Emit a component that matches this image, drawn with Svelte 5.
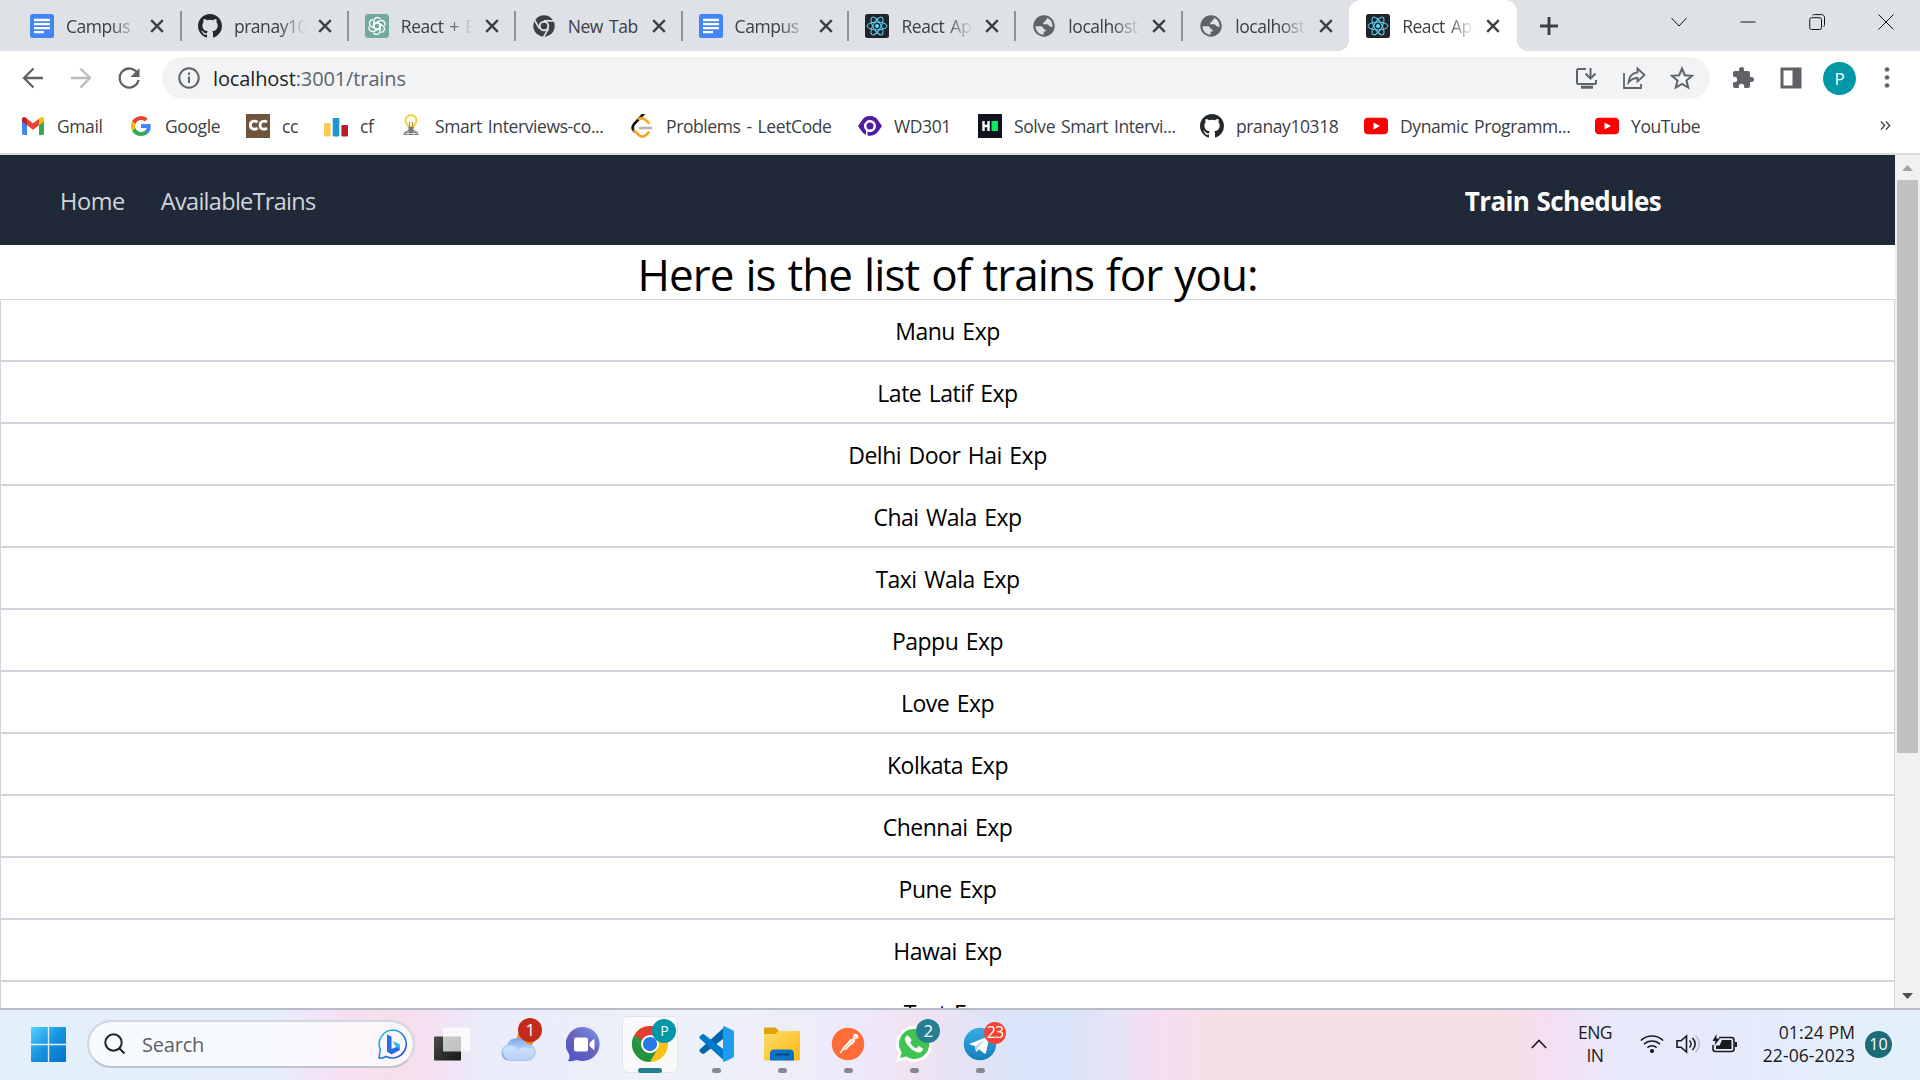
<script>
  const tabs = [
    { icon: 'doc', label: 'Campus Placement' },
    { icon: 'github', label: 'pranay10318' },
    { icon: 'gpt', label: 'React + Express' },
    { icon: 'chrome', label: 'New Tab' },
    { icon: 'doc', label: 'Campus Placement' },
    { icon: 'react', label: 'React App' },
    { icon: 'globe', label: 'localhost:3001' },
    { icon: 'globe', label: 'localhost:3001' },
    { icon: 'react', label: 'React App', active: true }
  ];
  const bookmarks = [
    { icon: 'gmail', label: 'Gmail', width: 108 },
    { icon: 'google', label: 'Google', width: 117 },
    { icon: 'cc', label: 'cc', width: 78 },
    { icon: 'cf', label: 'cf', width: 75 },
    { icon: 'bulb', label: 'Smart Interviews-co...', width: 231 },
    { icon: 'leet', label: 'Problems - LeetCode', width: 228 },
    { icon: 'wd', label: 'WD301', width: 120 },
    { icon: 'hacker', label: 'Solve Smart Intervi...', width: 222 },
    { icon: 'github', label: 'pranay10318', width: 164 },
    { icon: 'youtube', label: 'Dynamic Programm...', width: 231 },
    { icon: 'youtube', label: 'YouTube', width: 130 }
  ];
  const trains = ['Manu Exp', 'Late Latif Exp', 'Delhi Door Hai Exp', 'Chai Wala Exp', 'Taxi Wala Exp', 'Pappu Exp', 'Love Exp', 'Kolkata Exp', 'Chennai Exp', 'Pune Exp', 'Hawai Exp', 'Test Exp'];
  const apps = [
    { icon: 'desktop' },
    { icon: 'weather', badge: '1', tone: 'red' },
    { icon: 'chat' },
    { icon: 'chromeColor', badge: 'P', tone: 'teal', active: true },
    { icon: 'vscode', running: true },
    { icon: 'folder', running: true },
    { icon: 'postman', running: true },
    { icon: 'whatsapp', badge: '2', tone: 'blue', running: true },
    { icon: 'telegram', badge: '23', tone: 'coral', running: true }
  ];
</script>

{#snippet glyph(name)}
  {#if name === 'doc'}
    <svg viewBox="0 0 24 24"><rect width="24" height="24" rx="2.5" fill="#4285f4" /><path d="M4 6h16M4 10.2h16M4 14.2h16M4 18.2h10" stroke="#fff" stroke-width="2.3" /></svg>
  {:else if name === 'github'}
    <svg viewBox="0 0 16 16"><path fill="#24292f" d="M8 0C3.58 0 0 3.58 0 8c0 3.54 2.29 6.53 5.47 7.59.4.07.55-.17.55-.38 0-.19-.01-.82-.01-1.49-2.01.37-2.53-.49-2.69-.94-.09-.23-.48-.94-.82-1.13-.28-.15-.68-.52-.01-.53.63-.01 1.08.58 1.23.82.72 1.21 1.87.87 2.33.66.07-.52.28-.87.51-1.07-1.78-.2-3.64-.89-3.64-3.95 0-.87.31-1.59.82-2.15-.08-.2-.36-1.02.08-2.12 0 0 .67-.21 2.2.82a7.4 7.4 0 0 1 4 0c1.53-1.04 2.2-.82 2.2-.82.44 1.1.16 1.92.08 2.12.51.56.82 1.27.82 2.15 0 3.07-1.87 3.75-3.65 3.95.29.25.54.73.54 1.48 0 1.07-.01 1.93-.01 2.2 0 .21.15.46.55.38A8.01 8.01 0 0 0 16 8c0-4.42-3.58-8-8-8z" /></svg>
  {:else if name === 'gpt'}
    <svg viewBox="0 0 24 24"><rect width="24" height="24" rx="3" fill="#74aa9c" /><g fill="none" stroke="#fff" stroke-width="1.3" stroke-linejoin="round">{#each [0, 60, 120, 180, 240, 300] as turn}<path transform="rotate({turn} 12 12)" d="M8.9 13.8V7.2a3.6 3.6 0 0 1 6.6-2M8.9 10.2l3.1-1.8 5 2.9" />{/each}</g></svg>
  {:else if name === 'chrome'}
    <svg viewBox="0 0 24 24"><circle cx="12" cy="12" r="10.7" fill="#3c4043" /><path d="M12 6.8h10M7.5 14.6 2.6 6.2M16.5 14.6l-5 8.5" stroke="#dee1e6" stroke-width="1.7" /><circle cx="12" cy="12" r="4.3" fill="#3c4043" stroke="#dee1e6" stroke-width="1.9" /></svg>
  {:else if name === 'react'}
    <svg viewBox="0 0 24 24"><rect width="24" height="24" rx="2.5" fill="#20232a" /><g fill="none" stroke="#61dafb" stroke-width="1"><ellipse cx="12" cy="12" rx="10" ry="3.9" /><ellipse cx="12" cy="12" rx="10" ry="3.9" transform="rotate(60 12 12)" /><ellipse cx="12" cy="12" rx="10" ry="3.9" transform="rotate(120 12 12)" /></g><circle cx="12" cy="12" r="2" fill="#61dafb" /></svg>
  {:else if name === 'globe'}
    <svg viewBox="0 0 24 24"><circle cx="12" cy="12" r="10.700" fill="#5f6368" /><path d="M14 3.500c4 1 6.500 4.400 6.500 8.500l-.3 1.500c-.8-.9-1.700-1.300-3-1.200-.2-1.300-.9-2-2.400-2h-3.600l-.2-1.700c1.500-.2 2.100-.8 2.200-2.200 1.300-.2 1.800-.9 1.800-2.100zM3.500 12.200h5c1.900 0 2.800.9 2.900 2.600 1.700.3 2.300 1.100 2.200 2.600h-1.900v3.200c-4.500 0-8-3.500-8.200-8.400z" fill="#dee1e6" /></svg>
  {:else if name === 'gmail'}
    <svg viewBox="0 0 24 24"><path d="M1 5v14.500c0 .9.600 1.500 1.500 1.500H6V10z" fill="#4285f4" /><path d="M23 5v14.500c0 .9-.6 1.500-1.500 1.500H18V10z" fill="#34a853" /><path d="M18 4.700v6.500l5-3.700V5.300c0-2-2.200-2.900-3.600-1.700z" fill="#fbbc04" /><path d="M6 4.700v6.500L1 7.500V5.300c0-2 2.200-2.900 3.600-1.700z" fill="#c5221f" /><path d="m6 4.700 6 4.500 6-4.500v6.500l-6 4.500-6-4.500z" fill="#ea4335" /></svg>
  {:else if name === 'google'}
    <svg viewBox="0 0 48 48"><path fill="#ea4335" d="M24 12c3 0 5.600 1 7.600 3l5.700-5.700A20 20 0 0 0 6.100 15.100l6.600 5.100C14.300 15.500 18.700 12 24 12z" /><path fill="#4285f4" d="M43.600 24.500c0-1.500-.1-2.900-.4-4.300H24v8h11c-.5 2.600-1.900 4.800-4 6.300l6.500 5c3.900-3.600 6.100-8.900 6.100-15z" /><path fill="#fbbc05" d="M12.700 28.200a12 12 0 0 1 0-8l-6.600-5.100a20 20 0 0 0 0 18z" /><path fill="#34a853" d="M24 44c5.400 0 10-1.800 13.500-4.800l-6.500-5a12.200 12.200 0 0 1-18.300-6l-6.600 5.100A20 20 0 0 0 24 44z" /></svg>
  {:else if name === 'cc'}
    <svg viewBox="0 0 24 24"><rect width="24" height="24" fill="#70543e" /><path d="M11.600 8.200c-2.800-2-7.300-1-7.300 3s4.500 5 7.300 3M21 8.200c-2.800-2-7-1-7 3s4.200 5 7 3" fill="none" stroke="#fff" stroke-width="2.800" /></svg>
  {:else if name === 'cf'}
    <svg viewBox="0 0 24 24"><rect y="9" width="6.600" height="13.500" rx="1.200" fill="#f9cb55" /><rect x="8.700" y="4" width="6.600" height="18.500" rx="1.200" fill="#2196d3" /><rect x="17.400" y="11" width="6.600" height="11.500" rx="1.200" fill="#b91d2b" /></svg>
  {:else if name === 'bulb'}
    <svg viewBox="0 0 24 24"><path d="M9.500 13c-.4-2-3-3.500-3-6.500a5.500 5.500 0 0 1 11 0c0 3-2.600 4.500-3 6.500z" fill="#fffbe6" stroke="#edd044" stroke-width="1.800" /><path d="M10.500 8v6M13.500 8v6" stroke="#a48b39" /><path d="M9.500 13h5v3l4 2 1 3H4.500l1-3 4-2z" fill="#77787e" /><path d="M6 19.500h12M9 17v4M15 17v4" stroke="#d5d5d8" /></svg>
  {:else if name === 'leet'}
    <svg viewBox="0 0 24 24"><path d="M13.500 0 4.500 9.700c-2.500 2.700-2.500 5.300-.1 7.700" fill="none" stroke="#111" stroke-width="2.700" stroke-linecap="round" /><path d="m18.500 18.500-2.300 2.400c-2.300 2.300-5.300 2.400-7.600 0l-4.200-4.200M9 4.900c2.500-1.300 5-.8 7.100 1.400l2.500 2.500" fill="none" stroke="#ffa116" stroke-width="2.600" stroke-linecap="round" /><path d="M10 14h11" stroke="#b3b3b3" stroke-width="2.600" stroke-linecap="round" /></svg>
  {:else if name === 'wd'}
    <svg viewBox="0 0 24 24"><path fill="#4f1fa0" fill-rule="evenodd" d="M0 12 3.500 7a9.800 9.800 0 0 1 17 0L24 12l-3.500 5a9.800 9.800 0 0 1-11 4.500v-4A6 6 0 1 0 6 12c0 2 .7 3.200 2 4.500v4.400A9.800 9.800 0 0 1 3.500 17z" /><circle cx="12" cy="12" r="3.500" fill="#4f1fa0" /></svg>
  {:else if name === 'hacker'}
    <svg viewBox="0 0 24 24"><rect width="24" height="24" fill="#0e141e" /><path d="M5.500 7v10M10.500 7v10M5 12h6" stroke="#fff" stroke-width="2.400" /><rect x="13.500" y="7" width="6.500" height="10" fill="#00ea64" /></svg>
  {:else if name === 'youtube'}
    <svg viewBox="0 0 24 24"><rect y="3.700" width="24" height="16.600" rx="4" fill="#f00" /><path d="m9.500 8.500 6.500 3.500-6.500 3.500z" fill="#fff" /></svg>
  {:else if name === 'desktop'}
    <svg viewBox="0 0 36 36"><defs><linearGradient id="dk" x2="1" y2="1"><stop stop-color="#4a4a46" /><stop offset="1" stop-color="#181816" /></linearGradient></defs><rect x="0" y="10.500" width="27" height="24" rx="1" fill="url(#dk)" /><rect x="9" y="1.500" width="27" height="24" rx="1" fill="#fff" opacity=".72" /></svg>
  {:else if name === 'weather'}
    <svg viewBox="0 0 36 36"><defs><linearGradient id="wc" x2="0" y2="1"><stop stop-color="#7da7ea" /><stop offset=".5" stop-color="#b8d3f8" /><stop offset="1" stop-color="#7099de" /></linearGradient></defs><circle cx="26" cy="12" r="9" fill="#f18918" /><path d="M8 34.500a8 8 0 0 1-1-15.500 11 11 0 0 1 20-1 8 8 0 0 1 1 16.500z" fill="url(#wc)" /><path d="M8 34a8 8 0 0 1-1-14c5-2 9 0 11 4 4-4 13-3 16 0 2 4 0 10-6 10z" fill="#cfe1fb" opacity=".75" /></svg>
  {:else if name === 'chat'}
    <svg viewBox="0 0 36 36"><defs><linearGradient id="ch" x1="1" x2=".3" y2="1"><stop stop-color="#789cf0" /><stop offset=".5" stop-color="#6a64bd" /><stop offset="1" stop-color="#5455c6" /></linearGradient></defs><path d="M18 1A17 17 0 1 1 11 34c-3 1-6 1.500-9 .9 1.600-2 2-4 1-7A17 17 0 0 1 18 1z" fill="url(#ch)" /><rect x="8" y="11.500" width="14" height="14" rx="2" fill="#fff" /><path d="m24 17 4-3.500v10L24 20z" fill="#fff" stroke="#fff" stroke-linejoin="round" /></svg>
  {:else if name === 'chromeColor'}
    <svg viewBox="0 0 48 48"><circle cx="24" cy="24" r="24" fill="#fbc116" /><path d="M3.200 12A24 24 0 0 1 44.800 12H24a12 12 0 0 0-10.400 6z" fill="#e33b2e" /><path d="M3.200 12 13.600 30A12 12 0 0 0 34.400 30L24 48A24 24 0 0 1 3.200 12z" fill="#229342" /><path d="M3.200 12h20.800v4l-12 8z" fill="#e33b2e" /><path d="M3.200 12 13.600 30l4-8z" fill="#229342" /><circle cx="24" cy="24" r="12" fill="#fff" /><circle cx="24" cy="24" r="9.500" fill="#2878e8" /></svg>
  {:else if name === 'vscode'}
    <svg viewBox="0 0 36 36"><path d="M27 .5 2 23.300c-.8.700-.8 1.900 0 2.600l2 1.700c.6.500 1.400.5 2 .1L27 11.500z" fill="#0065a9" /><path d="M27 35.500 2 12.700c-.8-.7-.8-1.900 0-2.600l2-1.700c.6-.5 1.400-.5 2-.1L27 24.500z" fill="#007acc" /><path d="m26.500.2 8.200 4c.8.400 1.300 1.100 1.300 2v23.600c0 .9-.5 1.600-1.300 2l-8.200 4C25.200 36 24.700 35 25 34V2c-.2-1 .2-1.900 1.500-1.800z" fill="#1f9cf0" /></svg>
  {:else if name === 'folder'}
    <svg viewBox="0 0 36 36"><defs><linearGradient id="fo" x2="1" y2="1"><stop stop-color="#ffdc6c" /><stop offset="1" stop-color="#fdb90e" /></linearGradient></defs><path d="M0 3c0-1 .6-1.500 1.500-1.500h10L15 5h19.500c1 0 1.500.5 1.500 1.500V12H0z" fill="#e2a305" /><path d="M0 8h11l4-3h20l1 1v27c0 1-.5 1.500-1.500 1.500h-33C.5 34.500 0 34 0 33z" fill="url(#fo)" /><path d="M6 34.500v-7c0-2.200 1.500-4 4-4h16c2.500 0 4 1.800 4 4v7z" fill="#0873cb" /><path d="M11 28.500h14" stroke="#084a86" stroke-width="1.800" stroke-linecap="round" /></svg>
  {:else if name === 'postman'}
    <svg viewBox="0 0 36 36"><circle cx="18" cy="18" r="16.200" fill="#ff6c37" /><circle cx="25.500" cy="10.500" r="2.800" fill="#fff" /><path d="m9.500 27 3.500-5.500 7.500-8.500 3.500 2.500-7.500 8-3 .5-2.500 3z" fill="#fff" /><path d="m21 13 3.500-.5.500 3-3 3.500-3-2z" fill="#fff" /><path d="m14 23 9-8.500M23 9.500l4 3" stroke="#ff8b5e" stroke-width=".8" /></svg>
  {:else if name === 'whatsapp'}
    <svg viewBox="0 0 36 36"><path d="M18 0a18 18 0 1 1-8.500 33.800L0 36.300l2.500-9A18 18 0 0 1 18 0z" fill="#fff" /><path d="M18 3A15 15 0 1 1 10 30.500L4 32l1.700-5.500A15 15 0 0 1 18 3z" fill="#40c351" /><path d="M12 9.500c-1-.5-3 1-3.100 3.300 0 5 8.100 13.200 13.300 13.600 3 .2 5.300-2.200 4.800-4l-4.300-2.300c-1 .8-1.500 2-2.200 2.200-2.300-.7-5.200-3.300-6.200-5.900-.1-.7 1.200-1.400 1.400-2.300z" fill="#fff" /></svg>
  {:else if name === 'telegram'}
    <svg viewBox="0 0 36 36"><defs><linearGradient id="tg" x2="0" y2="1"><stop stop-color="#38aee4" /><stop offset="1" stop-color="#157db9" /></linearGradient></defs><circle cx="18" cy="18" r="16.200" fill="url(#tg)" /><path d="m7 18 19-7.500c1-.3 1.500.2 1.300 1.200L24 26.500c-.3 1-1 1.300-2 .7l-5-4-3 3-1-6z" fill="#fff" /><path d="m13 20 10.500-6.500-7.500 8-1.800 4z" fill="#b9d9ec" /></svg>
  {/if}
{/snippet}

<div class="screen">
  <header class="tabstrip">
    <div class="tabs">
      {#each tabs as tab, i}
        <div class="tab" class:active={tab.active} class:bare={i === 7 || tab.active}>
          <span class="ico">{@render glyph(tab.icon)}</span>
          <span class="tab-label" class:full={tab.label === 'New Tab'}>{tab.label}</span>
          <svg class="close" viewBox="0 0 14 14"><path d="m1.200 1.200 11.600 11.600m0-11.600L1.200 12.800" stroke="#3c4043" stroke-width="2.400" /></svg>
        </div>
      {/each}
    </div>
    <svg class="plus" viewBox="0 0 18 18"><path d="M9 0v18M0 9h18" stroke="#3c4043" stroke-width="2.900" /></svg>
    <div class="controls">
      <svg viewBox="0 0 16 16"><path d="m.5 4 7.500 8 7.500-8" /></svg>
      <svg viewBox="0 0 16 16"><path d="M.5 8h15" /></svg>
      <svg viewBox="0 0 16 16"><rect x=".7" y="3.700" width="11.800" height="11.800" rx="2" /><path d="M3.500 1.200C4 .7 4.500.6 5.500.6h7c1.800 0 3 1.200 3 3v6.900c0 1-.3 1.700-.8 2.200" /></svg>
      <svg viewBox="0 0 16 16"><path d="m.5.500 15 15m0-15-15 15" /></svg>
    </div>
  </header>

  <div class="toolbar">
    <div class="history">
      <svg viewBox="0 0 24 24"><path d="M22 12H3m9.500-9.500L3 12l9.500 9.500" stroke="#5f6368" /></svg>
      <svg viewBox="0 0 24 24"><path d="M2 12h19m-9.500-9.500L21 12l-9.500 9.500" stroke="#b9bbbe" /></svg>
      <svg viewBox="0 0 24 24"><path d="M20.300 7A9.500 9.500 0 1 0 21.500 14" stroke="#5f6368" /><path d="M22.500 2v9h-9z" fill="#5f6368" /></svg>
    </div>
    <div class="omnibox">
      <svg class="info" viewBox="0 0 22 22"><circle cx="11" cy="11" r="9.700" /><path d="M11 9.500V16M11 5.500V8" /></svg>
      <span class="url">localhost<i>:3001/trains</i></span>
      <span class="omni-actions">
        <svg viewBox="0 0 24 24"><path d="M12 3H4.500C3.400 3 3 3.600 3 4.500v12c0 .9.500 1.500 1.500 1.500h16c.9 0 1.500-.6 1.500-1.500V14M16.500 2v10m-5-4.500 5 5 5-5" /><path d="M7 21.200h12" stroke-width="3" /></svg>
        <svg viewBox="0 0 24 24"><path d="M2 7v15h17v-4M15.500 2.500l7 6.500-7 6.500V12c-4 0-6.500 1.300-9 4.500.5-6 3.500-9.500 9-10.200z" stroke-width="1.800" /></svg>
        <svg viewBox="0 0 24 24"><path d="m12 2.500 2.800 6.700 7.200.6-5.500 4.700 1.700 7-6.200-3.700-6.200 3.700 1.700-7L2 9.800l7.200-.6z" /></svg>
      </span>
    </div>
    <div class="extensions">
      <svg viewBox="0 0 24 24"><path fill="#5f6368" d="M20.500 11H19V7a2 2 0 0 0-2-2h-4V3.500a2.500 2.500 0 0 0-5 0V5H4a2 2 0 0 0-2 2v3.800h1.500a2.700 2.700 0 0 1 0 5.400H2V20a2 2 0 0 0 2 2h3.800v-1.500a2.700 2.700 0 0 1 5.400 0V22H17a2 2 0 0 0 2-2v-4h1.500a2.500 2.500 0 0 0 0-5z" /></svg>
      <svg viewBox="0 0 24 24"><path fill="#5f6368" fill-rule="evenodd" d="M1.500 1.500h21v21h-21zM4.500 4.500v15h9v-15z" /></svg>
      <span class="avatar">P</span>
      <svg viewBox="0 0 24 24"><g fill="#5f6368"><circle cx="12" cy="3.500" r="2.300" /><circle cx="12" cy="11.500" r="2.300" /><circle cx="12" cy="19.500" r="2.300" /></g></svg>
    </div>
  </div>

  <nav class="bookmarks">
    {#each bookmarks as mark}
      <span class="bookmark" style:width="{mark.width}px"><span class="ico">{@render glyph(mark.icon)}</span><b>{mark.label}</b></span>
    {/each}
    <svg class="more" viewBox="0 0 12 12"><path d="m1 1.500 4 4.500-4 4.500M6.500 1.500l4 4.500-4 4.500" /></svg>
  </nav>

  <div class="viewport">
    <main>
      <nav class="site-nav">
        <span class="home">Home</span>
        <span class="available">AvailableTrains</span>
        <strong>Train Schedules</strong>
      </nav>
      <h1>Here is the list of trains for you:</h1>
      {#each trains as train}
        <div class="train">{train}</div>
      {/each}
    </main>
    <aside class="scrollbar">
      <svg viewBox="0 0 25 25"><path d="m12.500 10 5.500 6H7z" fill="#a3a3a3" /></svg>
      <div class="thumb"></div>
      <svg viewBox="0 0 25 25"><path d="m12.500 16 5.500-6H7z" fill="#505050" /></svg>
    </aside>
  </div>

  <footer class="taskbar">
    <svg class="windows" viewBox="0 0 35 35"><defs><linearGradient id="win" x2="1" y2="1"><stop stop-color="#54d2ff" /><stop offset=".5" stop-color="#1593df" /><stop offset="1" stop-color="#0570cb" /></linearGradient></defs><path fill="url(#win)" d="M1 0h15.800v16.800H0V1q0-1 1-1zM18.200 0H34q1 0 1 1v15.800H18.200zM0 18.200h16.800V35H1q-1 0-1-1zM18.200 18.200H35V34q0 1-1 1H18.200z" /></svg>
    <div class="search">
      <svg class="lens" viewBox="0 0 22 22"><circle cx="9.500" cy="9.500" r="8.200" /><path d="m15.500 15.500 5 5" /></svg>
      <span>Search</span>
      <svg class="bing" viewBox="0 0 30 30"><defs><linearGradient id="bi" x2="1" y2="1"><stop stop-color="#16cfee" /><stop offset=".5" stop-color="#2785f1" /><stop offset="1" stop-color="#1c4ec5" /></linearGradient></defs><path d="M15 1A14 14 0 1 1 8 27.500C6 29 3.500 29.300 1 29l1.300-8.500A14 14 0 0 1 15 1z" fill="none" stroke="url(#bi)" stroke-width="1.600" /><path d="m9 5.500 4.500 2V20L22 16.500v4.500l-8.500 4.500-4.500-3z" fill="#2969ec" /><path d="m15 12 7 3.500v5.500l-2-2.500-3-1.500z" fill="#22bfe9" /></svg>
    </div>
    <div class="apps">
      {#each apps as app}
        <div class="app" class:current={app.active}>
          <span class="app-icon">{@render glyph(app.icon)}</span>
          {#if app.badge}<span class="badge {app.tone}">{app.badge}</span>{/if}
          {#if app.running || app.active}<span class="run" class:wide={app.active}></span>{/if}
        </div>
      {/each}
    </div>
    <div class="tray">
      <svg class="caret" viewBox="0 0 16 10"><path d="m.8 9 7.200-7.500L15.200 9" /></svg>
      <span class="lang">ENG<br />IN</span>
      <svg class="wifi" viewBox="0 0 24 20"><path d="M.8 6.500a16 16 0 0 1 22.400 0M4 10.200a11.500 11.500 0 0 1 16 0M7.300 13.700a6.700 6.700 0 0 1 9.400 0" /><circle cx="12" cy="17" r="1.300" fill="#191b20" /></svg>
      <svg class="volume" viewBox="0 0 24 20"><path d="M1 6.800h4L10.500 2v16L5 13.200H1zM13.500 6.500c2 2 2 5 0 7M16.500 4c3.500 3.500 3.500 8.500 0 12" /><path d="M19.500 1.500c5 5 5 12 0 17" opacity=".22" /></svg>
      <svg class="battery" viewBox="0 0 25 20"><path d="M7 3.500h12.500A2.500 2.500 0 0 1 22 6v9a2.500 2.500 0 0 1-2.500 2.500h-16A2.500 2.500 0 0 1 1 15v-4" /><path d="M10 6h9.500v9H4v-3.500h3.500zM4.500 0 .5 7h3l-1 4.500L8 4.500H4.500zM22.500 8H25v5h-2.500z" fill="#191b20" stroke="none" /></svg>
      <span class="clock">01:24 PM<br />22-06-2023</span>
      <span class="alerts">10</span>
    </div>
  </footer>
</div>

<style>
  :global(body) { overflow: hidden; }
  * { box-sizing: border-box; }
  svg { display: block; flex: none; }
  .screen { width: 1920px; height: 1080px; display: flex; flex-direction: column; overflow: hidden; background: #fff; color: #000; font-family: "Open Sans", "Noto Sans", sans-serif; }
  .ico { width: 24px; height: 24px; flex: none; }
  .ico svg { width: 100%; height: 100%; }
  .tabstrip { height: 51px; flex: none; display: flex; align-items: center; background: #dee1e6; padding-left: 14px; }
  .tabs { display: flex; height: 51px; }
  .tab { width: 166.9px; height: 51px; flex: none; position: relative; padding: 0 17px 0 16px; display: flex; align-items: center; gap: 12px; }
  .tab:nth-child(n + 2) { padding-left: 17px; }
  .tab::after { content: ""; position: absolute; right: -1px; top: 11px; width: 2px; height: 30px; background: #8f9297; }
  .tab.bare::after { display: none; }
  .tab.active { width: 168px; background: #fff; border-radius: 12px 12px 0 0; }
  .tab.active::before { content: ""; position: absolute; inset: auto -12px 0; height: 12px; background: radial-gradient(circle at 0 0, #dee1e6 12px, #fff 12.5px) left / 12px 12px no-repeat, radial-gradient(circle at 100% 0, #dee1e6 12px, #fff 12.5px) right / 12px 12px no-repeat; }
  .tab-label { width: 72px; flex: none; overflow: hidden; white-space: nowrap; font-size: 17.5px; letter-spacing: -.45px; word-spacing: 2px; color: #3c4043; mask-image: linear-gradient(90deg, #000 62%, transparent 100%); }
  .tab-label.full { mask-image: none; }
  .close { width: 14px; height: 14px; }
  .plus { width: 18px; height: 18px; margin-left: 23px; }
  .controls { display: flex; gap: 53px; margin: -8px 26px 0 auto; }
  .controls svg { width: 16px; height: 16px; fill: none; stroke: #111; stroke-width: 1; }
  .toolbar { height: 54px; flex: none; display: flex; align-items: center; }
  .history { width: 162px; flex: none; display: flex; gap: 24px; padding-left: 21px; }
  .history svg { width: 24px; height: 24px; fill: none; stroke-width: 2.3; }
  .omnibox { width: 1548px; height: 42px; display: flex; align-items: center; border-radius: 21px; background: #f1f3f4; padding: 0 16px 0 16px; }
  .info { width: 22px; height: 22px; fill: none; stroke: #5f6368; stroke-width: 2; }
  .url { margin-left: 13px; font-size: 20px; letter-spacing: -.12px; color: #202124; }
  .url i { font-style: normal; color: #5f6368; }
  .omni-actions { margin-left: auto; display: flex; gap: 24px; }
  .omni-actions svg { width: 24px; height: 24px; fill: none; stroke: #5f6368; stroke-width: 2; }
  .extensions { display: flex; align-items: center; margin-left: 21px; }
  .extensions svg { width: 24px; height: 24px; }
  .extensions svg:nth-child(2) { margin-left: 24px; }
  .avatar { width: 33px; height: 33px; border-radius: 50%; background: #0097a7; color: #fff; display: grid; place-items: center; font-size: 17px; margin: 0 19px 0 20px; }
  .bookmarks { height: 50px; flex: none; display: flex; align-items: center; padding: 0 29px 7px 21px; border-bottom: 2px solid #dadbdc; }
  .bookmark { display: flex; align-items: center; gap: 12px; flex: none; white-space: nowrap; }
  .bookmark b { font-weight: 400; font-size: 17.5px; letter-spacing: -.4px; word-spacing: 1.8px; color: #3c4043; }
  .more { width: 11px; height: 11px; margin-left: auto; fill: none; stroke: #3c4043; stroke-width: 1.5; }
  .viewport { height: 853px; flex: none; display: flex; overflow: hidden; }
  main { width: 1895px; height: 853px; overflow: hidden; }
  .site-nav { height: 90px; background: #1f2937; color: #d1d5db; display: flex; align-items: center; padding: 2px 234px 0 60px; font-size: 23.5px; letter-spacing: -.4px; }
  .available { margin-left: 36px; letter-spacing: -.7px; }
  .site-nav strong { margin-left: auto; font-size: 26px; letter-spacing: -.6px; word-spacing: 1px; color: #fff; font-weight: 700; }
  h1 { margin: 0; height: 54px; line-height: 58px; text-align: center; font-weight: 400; font-size: 44px; letter-spacing: -.95px; word-spacing: 1.5px; position: relative; }
  .train { height: 62px; border: 1px solid #d1d5db; display: flex; align-items: center; justify-content: center; padding-top: 1px; font-size: 23px; letter-spacing: -.5px; word-spacing: 2px; }
  .scrollbar { width: 25px; background: #f1f1f1; display: flex; flex-direction: column; align-items: center; }
  .scrollbar svg { width: 25px; height: 25px; }
  .thumb { width: 21px; height: 573px; background: #c1c1c1; margin-bottom: auto; }
  .taskbar { height: 72px; flex: none; display: flex; align-items: center; border-top: 2px solid #b8bcc7; background: linear-gradient(90deg, #e3effb 0, #e5effc 270px, #f6e0f4 335px, #f7dfe9 390px, #f4e0f3 430px, #eaecfa 490px, #eef0f9 720px, #edebfa 850px, #f0e2f3 915px, #dae4f8 1010px, #d9e5f8 1070px, #e6e3f7 1115px, #f4def3 1150px, #f5e0e6 1220px, #f4dfe5 1510px, #f5def4 1550px, #e9e9fb 1610px, #e6eafb 1700px, #e3effb 1850px); padding: 0 28px 2px 31px; }
  .windows { width: 35px; height: 35px; }
  .search { width: 328px; height: 48px; margin: 0 0 0 21px; border: 2px solid #ced7e2; border-bottom-color: #bec5d0; border-radius: 24px; background: #ffffffb8; background-clip: padding-box; display: flex; align-items: center; padding: 0 5px 0 15px; font-size: 20px; letter-spacing: -.2px; color: #5d5f64; }
  .lens { width: 22px; height: 22px; margin-right: 16px; fill: none; stroke: #222; stroke-width: 2; }
  .bing { width: 30px; height: 30px; margin-left: auto; }
  .apps { display: flex; margin-left: 4px; }
  .app { width: 66px; height: 68px; position: relative; display: flex; align-items: center; justify-content: center; }
  .app.current::before { content: ""; position: absolute; inset: 6px 5px 5px; background: #fafafd; border: 1px solid #e2e2e9; border-radius: 6px; }
  .app-icon { width: 36px; height: 36px; position: relative; }
  .app-icon svg { width: 36px; height: 36px; }
  .badge { position: absolute; top: 9px; right: 7px; width: 24px; height: 24px; border-radius: 50%; color: #fff; font-size: 17px; line-height: 24px; text-align: center; letter-spacing: -.8px; }
  .red { background: #c42b1c; top: 8px; right: 9px; }
  .teal { background: #0097a7; font-size: 14px; }
  .blue { background: #257f90; }
  .coral { background: #f44336; top: 12px; width: 22px; height: 22px; line-height: 21px; font-size: 16px; }
  .run { position: absolute; bottom: 5px; width: 9px; height: 5px; border-radius: 3px; background: #87888f; }
  .run.wide { width: 24px; background: #257f90; }
  .tray { display: flex; align-items: center; margin-left: auto; font-size: 17.5px; line-height: 23px; color: #191b20; letter-spacing: .1px; }
  .tray svg { fill: none; stroke: #191b20; stroke-width: 1.6; }
  .caret { width: 16px; height: 10px; }
  .lang { width: 36px; text-align: center; margin: 0 27px 0 30px; letter-spacing: -.5px; }
  .wifi { width: 24px; height: 20px; }
  .volume { width: 24px; height: 20px; margin-left: 12px; }
  .battery { width: 25px; height: 20px; margin-left: 12px; }
  .clock { width: 100px; text-align: right; margin-left: 18px; white-space: nowrap; }
  .alerts { width: 27px; height: 27px; margin-left: 10px; border-radius: 50%; background: #1c6c78; color: #fff; display: grid; place-items: center; font-size: 16px; }
</style>
